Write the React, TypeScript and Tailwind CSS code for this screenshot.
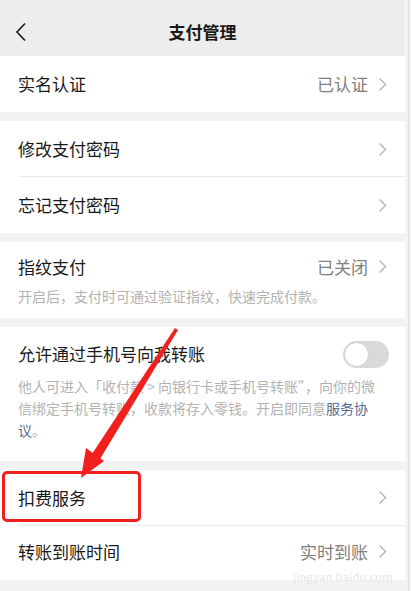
import React from 'react'

const font = { fontFamily: '"Noto Sans CJK SC", "Noto Sans", sans-serif' }

function Chevron() {
  return (
    <svg width="9" height="15" viewBox="0 0 9 15" className="shrink-0">
      <path d="M1.5 1.5 L7.5 7.5 L1.5 13.5" fill="none" stroke="#b3b3b3" strokeWidth="1.4" />
    </svg>
  )
}

function Row({ title, value, divider }: { title: string; value?: string; divider?: boolean }) {
  return (
    <div className="relative flex h-[56px] items-center pl-[18px] pr-[18px]">
      <span className="text-[17px] text-[#191919]">{title}</span>
      <div className="ml-auto flex items-center gap-[10px]">
        {value && <span className="text-[17px] text-[#808080]">{value}</span>}
        <Chevron />
      </div>
      {divider && <div className="absolute bottom-0 left-[18px] right-0 h-px bg-[#ececec]" />}
    </div>
  )
}

export default function App() {
  return (
    <div className="relative flex h-[591px] w-[411px] overflow-hidden bg-[#f2f2f2]" style={font}>
      <div className="flex w-[405px] flex-col">
        {/* 顶栏 */}
        <div className="relative flex h-[56px] items-center justify-center bg-[#ededed]">
          <svg width="12" height="20" viewBox="0 0 12 20" className="absolute left-[15px] top-[22px]">
            <path d="M10 1.5 L2 10 L10 18.5" fill="none" stroke="#1a1a1a" strokeWidth="1.6" />
          </svg>
          <span className="mt-[8px] text-[17px] font-bold text-[#191919]">支付管理</span>
        </div>

        <div className="bg-white">
          <Row title="实名认证" value="已认证" />
        </div>

        <div className="mt-[9px] bg-white">
          <Row title="修改支付密码" divider />
          <Row title="忘记支付密码" />
        </div>

        <div className="mt-[9px] bg-white px-[18px] pb-[10px] pt-[12px]">
          <div className="flex items-center">
            <span className="text-[17px] text-[#191919]">指纹支付</span>
            <div className="ml-auto flex items-center gap-[10px]">
              <span className="text-[17px] text-[#808080]">已关闭</span>
              <Chevron />
            </div>
          </div>
          <p className="mt-[4px] text-[14px] leading-[24px] text-[#b2b2b2]">开启后，支付时可通过验证指纹，快速完成付款。</p>
        </div>

        <div className="mt-[9px] bg-white pb-[20px] pl-[18px] pr-[16px] pt-[14px]">
          <div className="flex items-center">
            <span className="text-[17px] text-[#191919]">允许通过手机号向我转账</span>
            <div className="ml-auto flex h-[27px] w-[46px] items-center rounded-full bg-[#d9d9d9] p-px">
              <div className="h-[25px] w-[25px] rounded-full border border-[#cfcfcf] bg-white" />
            </div>
          </div>
          <p className="mt-[7px] text-[14px] leading-[22px] text-[#b2b2b2]">
            他人可进入「收付款 &gt; 向银行卡或手机号转账”，向你的微信绑定手机号转账，收款将存入零钱。开启即同意<span className="text-[#576b95]">服务协议</span>。
          </p>
        </div>

        <div className="mt-[9px] bg-white">
          <div className="h-[54px]">
            <Row title="扣费服务" divider />
          </div>
          <Row title="转账到账时间" value="实时到账" />
        </div>
      </div>

      {/* 右侧边 */}
      <div className="w-[6px] border-l border-[#f7f7f7]">
        <div className="ml-[2px] h-full w-px bg-[#dcdcdc]" />
      </div>

      {/* 标注：红框与箭头 */}
      <div className="pointer-events-none absolute left-[2px] top-[471px] h-[51px] w-[139px] rounded-[5px] border-[3px] border-[#f2201d]" />
      <svg width="411" height="591" className="pointer-events-none absolute left-0 top-0">
        <polygon points="175,328 178,330 100,459 92,454" fill="#f2201d" />
        <polygon points="81,478 86,448 104,461" fill="#f2201d" />
      </svg>

      {/* 水印 */}
      <span className="pointer-events-none absolute left-[293px] top-[568px] text-[11px] tracking-wide text-[#e6e6e6]">jingyan.baidu.com</span>
    </div>
  )
}
